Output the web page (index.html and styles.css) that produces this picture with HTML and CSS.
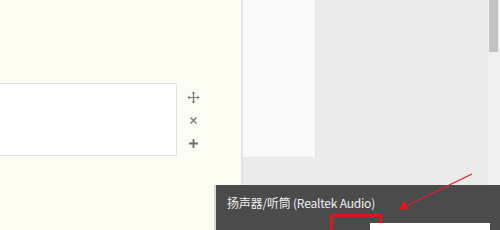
FILE: index.html
```html
<!DOCTYPE html>
<html>
<head>
<meta charset="utf-8">
<link rel="stylesheet" href="styles.css">
</head>
<body>
<div class="page">
  <div class="left">
    <div class="field-row">
      <div class="field"></div>
      <div class="tools">
        <svg class="ico" width="13" height="13" viewBox="0 0 13 13"><g fill="none" stroke="#7a7a7a" stroke-width="1.2"><path d="M6.5 1.5v10M1.5 6.5h10"/></g><g fill="#7a7a7a"><path d="M6.5 0.5l2 2h-4z"/><path d="M6.5 12.5l2-2h-4z"/><path d="M0.5 6.5l2-2v4z"/><path d="M12.5 6.5l-2-2v4z"/></g></svg>
        <svg class="ico" width="13" height="13" viewBox="0 0 13 13"><path d="M3.5 3.5l6 6M9.5 3.5l-6 6" stroke="#7a7a7a" stroke-width="1.4" fill="none"/></svg>
        <svg class="ico" width="13" height="13" viewBox="0 0 13 13"><path d="M6.5 2v9M2 6.5h9" stroke="#6e6e6e" stroke-width="1.8" fill="none"/></svg>
      </div>
    </div>
  </div>
  <div class="divider"></div>
  <div class="right">
    <div class="panel"></div>
    <div class="gray"></div>
    <div class="scroll"><div class="thumb"></div></div>
  </div>
</div>
<div class="popup">
  <div class="popup-title">扬声器/听筒 (Realtek Audio)</div>
  <div class="popup-body">
    <div class="mark"></div>
    <div class="slot"></div>
  </div>
</div>
<svg class="arrow" width="500" height="230" viewBox="0 0 500 230">
  <line x1="472" y1="174" x2="406" y2="206" stroke="#e0202a" stroke-width="1.2"/>
  <path d="M399 210 L404 201 L409 209 Z" fill="#e8141e"/>
</svg>
</body>
</html>
```
FILE: styles.css
```css
html, body { margin: 0; padding: 0; }
body { width: 500px; height: 230px; overflow: hidden; position: relative; font-family: "Noto Sans CJK SC", "Noto Sans", sans-serif; }
.page { display: flex; height: 230px; }
.left { width: 241px; background: #fcfcf3; padding-top: 83px; box-sizing: border-box; }
.field-row { display: flex; align-items: flex-start; }
.field { width: 176px; height: 71px; background: #fff; border: 1px solid #e2e2dc; border-left: none; }
.tools { display: flex; flex-direction: column; align-items: center; margin-left: 10px; padding-top: 8px; gap: 10px; }
.ico { display: block; }
.divider { width: 2px; background: #e6e6e6; }
.right { flex: 1; display: flex; background: #ebebeb; }
.panel { width: 72px; height: 157px; background: #f9f9f9; border-right: 1px solid #e4e4e4; }
.gray { flex: 1; }
.scroll { width: 12px; background: #f0f0f0; padding: 0 2px 0 1px; box-sizing: border-box; }
.thumb { height: 52px; background: #c3c3c3; }
.popup { position: absolute; left: 216px; top: 185px; width: 284px; height: 45px; overflow: hidden; background: #4b4b4b; box-shadow: -2px 0 0 #d6d6d6; }
.popup-title { color: #f0f0f0; font-size: 12px; line-height: 16px; padding: 10px 0 0 11px; letter-spacing: -0.2px; }
.popup-body { position: relative; }
.mark { position: absolute; left: 114px; top: 3px; width: 52px; height: 30px; border: 3px solid #d81a1f; border-bottom: none; box-sizing: border-box; }
.slot { position: absolute; left: 154px; top: 12px; width: 120px; height: 10px; background: #fff; }
.arrow { position: absolute; left: 0; top: 0; pointer-events: none; }
```
